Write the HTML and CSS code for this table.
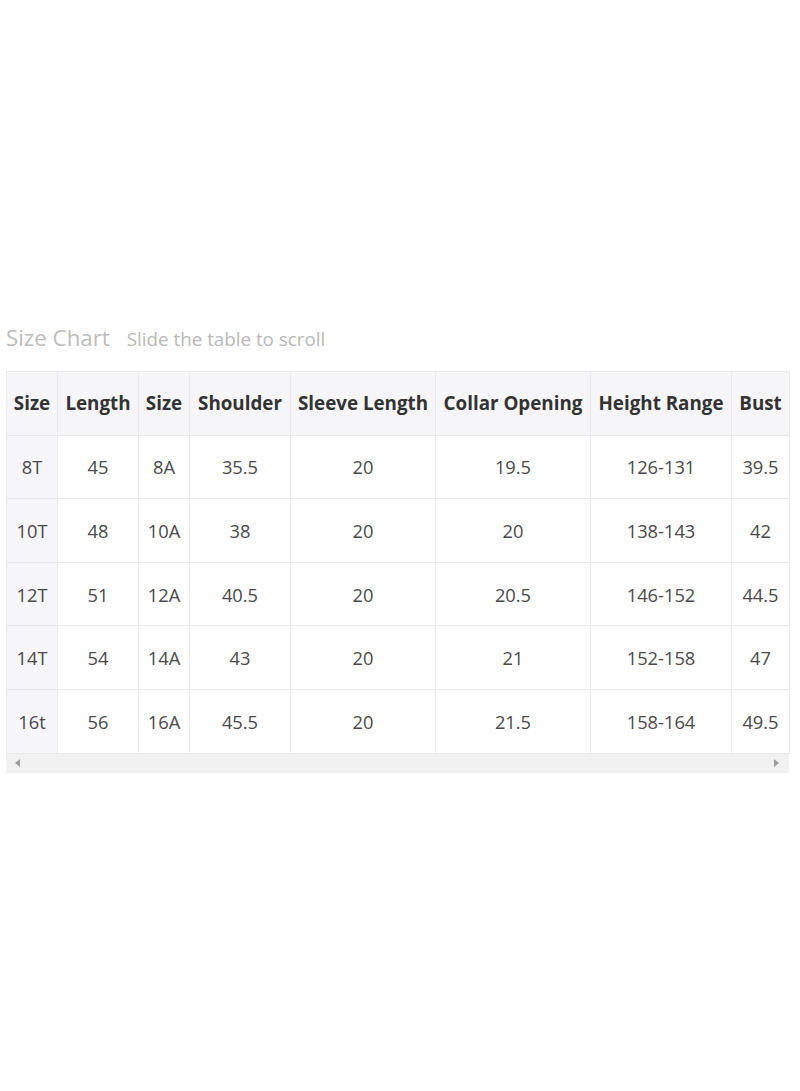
FILE: index.html
```html
<!DOCTYPE html>
<html>
<head>
<meta charset="utf-8">
<link rel="stylesheet" href="styles.css">
</head>
<body>
<div class="page">
  <div class="heading">
    <span class="title">Size Chart</span>
    <span class="hint">Slide the table to scroll</span>
  </div>
  <div class="scroller">
    <table class="chart">
      <colgroup>
        <col class="c1"><col class="c2"><col class="c3"><col class="c4"><col class="c5"><col class="c6"><col class="c7"><col class="c8">
      </colgroup>
      <thead>
        <tr><th>Size</th><th>Length</th><th>Size</th><th>Shoulder</th><th>Sleeve Length</th><th>Collar Opening</th><th>Height Range</th><th>Bust</th></tr>
      </thead>
      <tbody>
        <tr><td class="first">8T</td><td>45</td><td>8A</td><td>35.5</td><td>20</td><td>19.5</td><td>126-131</td><td>39.5</td></tr>
        <tr><td class="first">10T</td><td>48</td><td>10A</td><td>38</td><td>20</td><td>20</td><td>138-143</td><td>42</td></tr>
        <tr><td class="first">12T</td><td>51</td><td>12A</td><td>40.5</td><td>20</td><td>20.5</td><td>146-152</td><td>44.5</td></tr>
        <tr><td class="first">14T</td><td>54</td><td>14A</td><td>43</td><td>20</td><td>21</td><td>152-158</td><td>47</td></tr>
        <tr><td class="first">16t</td><td>56</td><td>16A</td><td>45.5</td><td>20</td><td>21.5</td><td>158-164</td><td>49.5</td></tr>
      </tbody>
    </table>
    <div class="scrollbar">
      <span class="arrow left"></span>
      <span class="arrow right"></span>
    </div>
  </div>
</div>
</body>
</html>
```
FILE: styles.css
```css
html, body {
  margin: 0;
  padding: 0;
  background: #ffffff;
}
body {
  font-family: "Open Sans", "Noto Sans", sans-serif;
  color: #444;
}
.page {
  padding: 322px 11px 0 6px;
}
.heading {
  display: flex;
  align-items: baseline;
  gap: 17px;
  height: 33px;
  margin-bottom: 16px;
}
.title {
  font-size: 22.3px;
  color: #bdbdbd;
}
.hint {
  font-size: 18.8px;
  color: #b9b9b9;
}
.scroller {
  width: 783px;
}
.chart {
  border-collapse: collapse;
  table-layout: fixed;
  width: 783px;
}
.c1 { width: 51px; }
.c2 { width: 81px; }
.c3 { width: 51px; }
.c4 { width: 101px; }
.c5 { width: 145px; }
.c6 { width: 155px; }
.c7 { width: 141px; }
.c8 { width: 58px; }
.chart th, .chart td {
  border: 1px solid #e9e9ec;
  height: 62.6px;
  padding: 0;
  text-align: center;
  white-space: nowrap;
  font-size: 18.3px;
}
.chart th {
  background: #f6f6f8;
  color: #333;
  font-weight: 700;
  font-size: 18.8px;
}
.chart td {
  color: #4a4a4a;
  background: #fff;
}
.chart td.first {
  background: #f6f6f8;
}
.scrollbar {
  position: relative;
  height: 19px;
  background: #f1f1f1;
}
.arrow {
  position: absolute;
  top: 5px;
  width: 0;
  height: 0;
  border-top: 4.5px solid transparent;
  border-bottom: 4.5px solid transparent;
}
.arrow.left {
  left: 9px;
  border-right: 5px solid #9c9c9c;
}
.arrow.right {
  right: 10px;
  border-left: 5px solid #9c9c9c;
}
```
